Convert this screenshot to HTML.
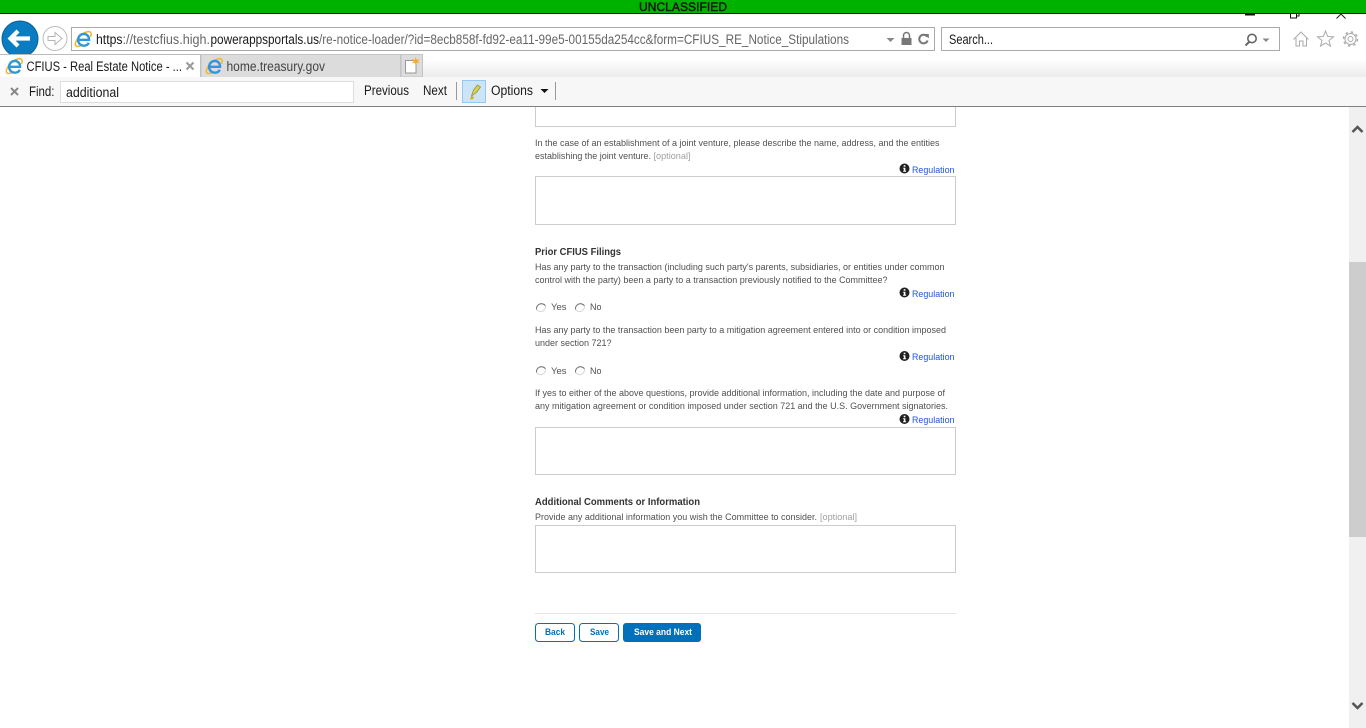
<!DOCTYPE html>
<html><head><meta charset="utf-8"><title>CFIUS - Real Estate Notice</title>
<style>
html,body{margin:0;padding:0;background:#fff;overflow:hidden;width:1366px;height:728px}
svg{display:block;position:absolute;left:0;top:0}
text{font-family:"Liberation Sans",Arial,sans-serif;white-space:pre}
.u{font-size:13.5px;fill:#1a1a1a}
.g{font-size:13.5px;fill:#666}
.p{font-size:9.3px;fill:#505050}
.o{font-size:9.3px;fill:#a0a0a0}
.h{font-size:9.7px;font-weight:bold;fill:#333}
.r{font-size:9.6px;fill:#1f55e0}
.b{font-size:9.3px;font-weight:bold}
.box{fill:#fff;stroke:#ccc;stroke-width:1}
</style></head><body>
<svg width="1366" height="728" viewBox="0 0 1366 728" xmlns="http://www.w3.org/2000/svg">
<defs>
<linearGradient id="tb" x1="0" y1="0" x2="0" y2="1"><stop offset="0.2" stop-color="#fff"/><stop offset="1" stop-color="#ececec"/></linearGradient>
<symbol id="ie" viewBox="0 0 18 18" overflow="visible">
<path d="M16.300 1.800C14.300 .2 8.500 2.300 4.500 6.500 .8 10.400-.6 14.800 1 16.300c1.400 1.300 4.500.4 7.200-1.500" fill="none" stroke="#f0b62e" stroke-width="1.600"/>
<path d="M16.300 1.800c1.100 1 .9 3.200 0 5" fill="none" stroke="#f0b62e" stroke-width="1.600"/>
<path d="M4 9.900h10.900c.1-3.700-2.300-6.300-5.600-6.300-3.500 0-6 2.800-6 6.300 0 3.600 2.600 6.200 6.100 6.200 2.500 0 4.300-1.100 5.200-3.100" fill="none" stroke="#2f97dc" stroke-width="2.500"/>
</symbol>
<symbol id="info" viewBox="0 0 10 10">
<circle cx="5" cy="5" r="5" fill="#222"/>
<rect x="4.200" y="1.700" width="1.700" height="1.500" fill="#fff"/>
<path d="M3.600 4.200h2.300v3.100h.7v.9H3.600v-.9h.7V5.100h-.7z" fill="#fff"/>
</symbol>
<symbol id="radio" viewBox="0 0 12 12">
<path d="M1.500 7.500A5 5 0 0 1 10.500 3.800" fill="none" stroke="#777" stroke-width="1.100"/>
<path d="M10.500 3.800A5 5 0 0 1 1.500 7.500" fill="none" stroke="#d8d8d8" stroke-width="1.100"/>
</symbol>
</defs>

<!-- banner -->
<rect x="0" y="0" width="1366" height="13" fill="#00b200"/>
<rect x="0" y="13" width="1366" height="1" fill="#111"/>
<text x="639" y="11" font-size="12" fill="#111" stroke="#111" stroke-width=".4" textLength="88" lengthAdjust="spacing">UNCLASSIFIED</text>

<!-- window controls -->
<rect x="1245" y="14" width="10" height="1.500" fill="#111"/>
<path d="M1290.500 14v4h6v-4M1296.500 16h2.500v-2" fill="none" stroke="#111"/>
<path d="M1336.500 18.500l4.500-4.500 4.500 4.500" fill="none" stroke="#222"/>

<!-- nav -->
<circle cx="20" cy="39" r="18" fill="#0a7cc2" stroke="#0d5f96" stroke-width="1"/>
<path d="M10 38.500h20M18 31l-7.500 7.500L18 46" fill="none" stroke="#fff" stroke-width="4.200"/>
<circle cx="55" cy="38.500" r="12" fill="#fff" stroke="#bdbdbd"/>
<path d="M48 36.500h7v-4l7 6-7 6v-4h-7z" fill="#fff" stroke="#b5b5b5"/>

<rect x="71.500" y="27.500" width="863" height="23" fill="#fff" stroke="#aaa"/>
<use href="#ie" x="75" y="30.500" width="17" height="17"/>
<text class="u" x="96" y="44" textLength="26.500" lengthAdjust="spacingAndGlyphs">https</text>
<text class="g" x="122.500" y="44" textLength="87.500" lengthAdjust="spacingAndGlyphs">://testcfius.high.</text>
<text class="u" x="210.500" y="44" textLength="108.500" lengthAdjust="spacingAndGlyphs">powerappsportals.us</text>
<text class="g" x="319" y="44" textLength="530" lengthAdjust="spacingAndGlyphs">/re-notice-loader/?id=8ecb858f-fd92-ea11-99e5-00155da254cc&amp;form=CFIUS_RE_Notice_Stipulations</text>
<path d="M886.500 38h8l-4 4z" fill="#888"/>
<path d="M903.500 38v-2.500a3 3 0 0 1 6 0V38" fill="none" stroke="#777" stroke-width="1.500"/>
<rect x="901.500" y="38" width="10" height="7" fill="#777"/>
<path d="M927 36.500a4.300 4.300 0 1 0 .6 4" fill="none" stroke="#777" stroke-width="2"/>
<path d="M924 34h4.800v4.500z" fill="#777"/>

<rect x="941.500" y="27.500" width="338" height="23" fill="#fff" stroke="#aaa"/>
<text class="u" x="949" y="44" textLength="44" lengthAdjust="spacingAndGlyphs">Search...</text>
<circle cx="1252" cy="38.500" r="4.200" fill="none" stroke="#666" stroke-width="1.600"/>
<path d="M1249 42l-3.500 3.500" stroke="#666" stroke-width="2"/>
<path d="M1262.500 38.500h7l-3.500 3.500z" fill="#888"/>

<path d="M1293.500 39.500l7.500-7.500 7.500 7.500M1296 38v8h3.500v-5h3.500v5h3.500v-8" fill="none" stroke="#aaa"/>
<path d="M1325.500 31l2.200 5.500 5.800.3-4.500 3.700 1.500 5.700-5-3.200-5 3.200 1.500-5.700-4.500-3.700 5.800-.3z" fill="#fff" stroke="#aaa"/>
<circle cx="1350.500" cy="39" r="5.500" fill="none" stroke="#aaa" stroke-width="1"/>
<circle cx="1350.500" cy="39" r="2.500" fill="none" stroke="#aaa" stroke-width="1"/>
<circle cx="1350.500" cy="39" r="7" fill="none" stroke="#aaa" stroke-width="1.500" stroke-dasharray="2.500 3"/>

<!-- tabs -->
<rect x="423" y="54" width="943" height="23" fill="url(#tb)"/>
<rect x="0" y="54" width="200.500" height="24" fill="#fff"/>
<rect x="0" y="54" width="201" height="1" fill="#bbb"/>
<rect x="200" y="54" width="1" height="24" fill="#bbb"/>
<use href="#ie" x="6" y="57.500" width="17" height="17"/>
<text class="u" x="26.500" y="71" textLength="155.500" lengthAdjust="spacingAndGlyphs">CFIUS - Real Estate Notice - ...</text>
<path d="M186.500 62.500l7 7M193.500 62.500l-7 7" stroke="#999" stroke-width="2"/>
<rect x="201" y="54.500" width="199.500" height="23" fill="#dcdcdc" stroke="#c4c4c4" stroke-width="1"/>
<use href="#ie" x="206" y="57.500" width="17" height="17"/>
<text class="u" x="226.500" y="71" textLength="98.500" lengthAdjust="spacingAndGlyphs" style="fill:#444">home.treasury.gov</text>
<rect x="401" y="54.500" width="21.500" height="22.500" fill="#dcdcdc" stroke="#c4c4c4"/>
<rect x="405.500" y="60.500" width="10.500" height="12.500" fill="#fff" stroke="#999"/>
<path d="M415.700 57l1 3 3-1-2 2.200 2 2.200-3-.9-1 3-1-3-3 .9 2-2.200-2-2.200 3 1z" fill="#f9a825"/>

<!-- find bar -->
<rect x="0" y="77" width="1366" height="29" fill="#f7f7f7"/>
<rect x="0" y="106" width="1366" height="1" fill="#808080"/>
<path d="M11 88l7 7M18 88l-7 7" stroke="#888" stroke-width="2"/>
<text class="u" x="29" y="96" textLength="25.500" lengthAdjust="spacingAndGlyphs">Find:</text>
<rect x="60.500" y="81.500" width="293" height="21" fill="#fff" stroke="#ddd"/>
<text class="u" x="66" y="97" textLength="53" lengthAdjust="spacingAndGlyphs">additional</text>
<text class="u" x="364" y="95" textLength="45" lengthAdjust="spacingAndGlyphs">Previous</text>
<text class="u" x="423" y="95" textLength="24" lengthAdjust="spacingAndGlyphs">Next</text>
<rect x="456" y="82" width="1" height="18" fill="#999"/>
<rect x="462.500" y="80.500" width="23" height="22" fill="#cce4f7" stroke="#90c8f6"/>
<path d="M471.500 96l2-6 4-5 3 2-4 5.500z" fill="#d8d24a" stroke="#8a8a40" stroke-width=".7"/>
<path d="M470 99.500l1.500-3.500 2.500 1-1 2z" fill="#c7b400"/>
<text class="u" x="491" y="95" textLength="42" lengthAdjust="spacingAndGlyphs">Options</text>
<path d="M540.500 89h8l-4 4z" fill="#111"/>
<rect x="555" y="82" width="1" height="18" fill="#999"/>

<!-- scrollbar -->
<rect x="1349" y="107" width="17" height="621" fill="#f0f0f0"/>
<rect x="1349" y="262" width="17" height="275" fill="#cdcdcd"/>
<path d="M1352.500 132l5-5 5 5" fill="none" stroke="#555" stroke-width="2.500"/>
<path d="M1352.500 703l5 5 5-5" fill="none" stroke="#555" stroke-width="2.500"/>

<!-- content -->
<path d="M535.500 107v19.500h420V107" fill="#fff" stroke="#ccc"/>

<text class="p" x="535" y="146" textLength="404.500" lengthAdjust="spacingAndGlyphs">In the case of an establishment of a joint venture, please describe the name, address, and the entities</text>
<text class="p" x="535" y="159" textLength="116" lengthAdjust="spacingAndGlyphs">establishing the joint venture.</text>
<text class="o" x="653.500" y="159" textLength="37" lengthAdjust="spacingAndGlyphs">[optional]</text>
<use href="#info" x="899.500" y="163.500" width="10" height="10"/>
<text class="r" x="912" y="173" textLength="42.500" lengthAdjust="spacingAndGlyphs">Regulation</text>
<rect class="box" x="535.500" y="176.500" width="420" height="48"/>

<text class="h" x="535" y="255" textLength="86" lengthAdjust="spacingAndGlyphs">Prior CFIUS Filings</text>
<text class="p" x="535" y="270" textLength="409.500" lengthAdjust="spacingAndGlyphs">Has any party to the transaction (including such party's parents, subsidiaries, or entities under common</text>
<text class="p" x="535" y="283" textLength="352.500" lengthAdjust="spacingAndGlyphs">control with the party) been a party to a transaction previously notified to the Committee?</text>
<use href="#info" x="899.500" y="287.500" width="10" height="10"/>
<text class="r" x="912" y="297" textLength="42.500" lengthAdjust="spacingAndGlyphs">Regulation</text>
<use href="#radio" x="535" y="302" width="12" height="12"/>
<text class="p" x="551" y="310" textLength="15.500" lengthAdjust="spacingAndGlyphs">Yes</text>
<use href="#radio" x="574" y="302" width="12" height="12"/>
<text class="p" x="590" y="310" textLength="11.500" lengthAdjust="spacingAndGlyphs">No</text>

<text class="p" x="535" y="333" textLength="411" lengthAdjust="spacingAndGlyphs">Has any party to the transaction been party to a mitigation agreement entered into or condition imposed</text>
<text class="p" x="535" y="346" textLength="76.500" lengthAdjust="spacingAndGlyphs">under section 721?</text>
<use href="#info" x="899.500" y="351" width="10" height="10"/>
<text class="r" x="912" y="360" textLength="42.500" lengthAdjust="spacingAndGlyphs">Regulation</text>
<use href="#radio" x="535" y="365" width="12" height="12"/>
<text class="p" x="551" y="374" textLength="15.500" lengthAdjust="spacingAndGlyphs">Yes</text>
<use href="#radio" x="574" y="365" width="12" height="12"/>
<text class="p" x="590" y="374" textLength="11.500" lengthAdjust="spacingAndGlyphs">No</text>

<text class="p" x="535" y="396" textLength="410" lengthAdjust="spacingAndGlyphs">If yes to either of the above questions, provide additional information, including the date and purpose of</text>
<text class="p" x="535" y="409" textLength="413" lengthAdjust="spacingAndGlyphs">any mitigation agreement or condition imposed under section 721 and the U.S. Government signatories.</text>
<use href="#info" x="899.500" y="414" width="10" height="10"/>
<text class="r" x="912" y="423" textLength="42.500" lengthAdjust="spacingAndGlyphs">Regulation</text>
<rect class="box" x="535.500" y="427.500" width="420" height="47"/>

<text class="h" x="535" y="505" textLength="165" lengthAdjust="spacingAndGlyphs">Additional Comments or Information</text>
<text class="p" x="535" y="520" textLength="282" lengthAdjust="spacingAndGlyphs">Provide any additional information you wish the Committee to consider.</text>
<text class="o" x="820" y="520" textLength="37" lengthAdjust="spacingAndGlyphs">[optional]</text>
<rect class="box" x="535.500" y="525.500" width="420" height="47"/>

<rect x="535" y="613" width="421" height="1" fill="#e5e5e5"/>

<rect x="535.500" y="623.500" width="39" height="18" rx="3" fill="#fff" stroke="#0070ba"/>
<text class="b" x="545" y="635" style="fill:#0070ba" textLength="20" lengthAdjust="spacingAndGlyphs">Back</text>
<rect x="579.500" y="623.500" width="39" height="18" rx="3" fill="#fff" stroke="#0070ba"/>
<text class="b" x="590" y="635" style="fill:#0070ba" textLength="19" lengthAdjust="spacingAndGlyphs">Save</text>
<rect x="623" y="623" width="78" height="19" rx="3" fill="#0070ba"/>
<text class="b" x="634" y="635" style="fill:#fff" textLength="58" lengthAdjust="spacingAndGlyphs">Save and Next</text>
</svg>
</body></html>
